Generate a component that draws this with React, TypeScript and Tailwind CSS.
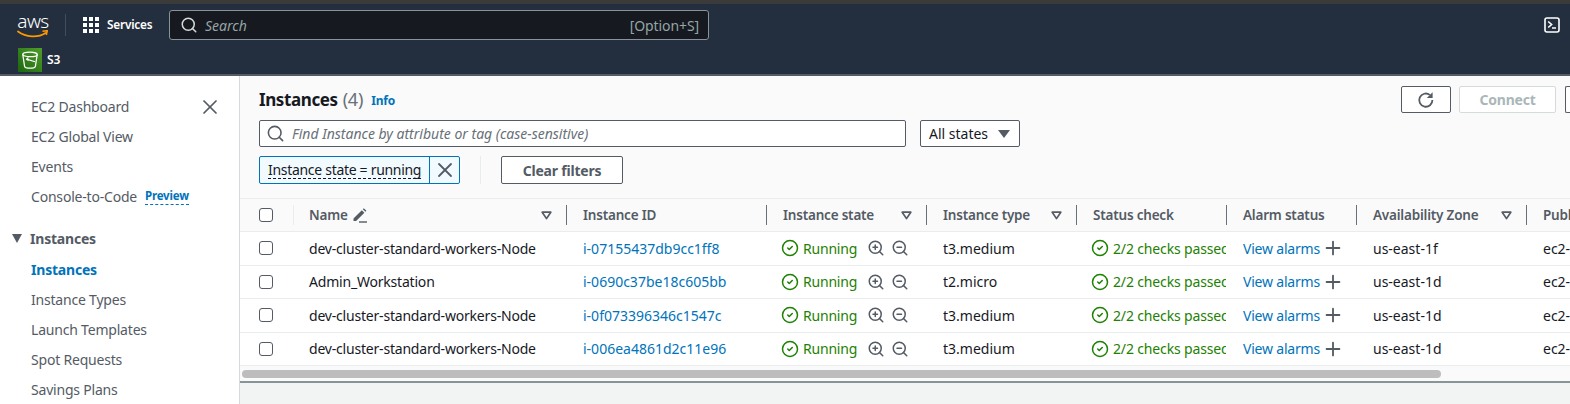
import { CircleCheck, Plus, Search, X, ZoomIn, ZoomOut } from 'lucide-react';
import React from 'react';

type Instance = {
  name: string;
  id: string;
  type: string;
  zone: string;
};

const instances: Instance[] = [
  { name: 'dev-cluster-standard-workers-Node', id: 'i-07155437db9cc1ff8', type: 't3.medium', zone: 'us-east-1f' },
  { name: 'Admin_Workstation', id: 'i-0690c37be18c605bb', type: 't2.micro', zone: 'us-east-1d' },
  { name: 'dev-cluster-standard-workers-Node', id: 'i-0f073396346c1547c', type: 't3.medium', zone: 'us-east-1d' },
  { name: 'dev-cluster-standard-workers-Node', id: 'i-006ea4861d2c11e96', type: 't3.medium', zone: 'us-east-1d' },
];

const navTop = ['EC2 Dashboard', 'EC2 Global View', 'Events'];
const navInstances = ['Instance Types', 'Launch Templates', 'Spot Requests', 'Savings Plans'];

const Checkbox = () => (
  <span className="block h-[14px] w-[14px] rounded-[3px] border border-[#545b64] bg-white" />
);

const SortCaret = () => (
  <svg width="11" height="9" viewBox="0 0 11 9" className="ml-auto shrink-0">
    <path d="M1.2 1.2h8.6L5.5 7.6z" fill="none" stroke="#545b64" strokeWidth="1.7" strokeLinejoin="round" />
  </svg>
);

const HeaderCell = ({
  width,
  label,
  sortable,
}: {
  width: string;
  label: string;
  sortable?: boolean;
}) => (
  <div className={`flex h-full shrink-0 items-center ${width}`}>
    <span className="h-[20px] w-px shrink-0 bg-[#687078]" />
    <div className="flex min-w-0 flex-1 items-center whitespace-nowrap pl-[16px] pr-[14px] text-[13.5px] font-semibold text-[#545b64]">
      <span>{label}</span>
      {sortable && <SortCaret />}
    </div>
  </div>
);

const Row = ({ item }: { item: Instance }) => (
  <div className="flex h-[33.5px] items-center whitespace-nowrap border-b border-[#eaeded] text-[14px] text-[#16191f]">
    <div className="flex w-[53px] shrink-0 pl-[19px]">
      <Checkbox />
    </div>
    <div className="w-[273px] shrink-0 pl-[16px]">{item.name}</div>
    <div className="w-[200px] shrink-0 pl-[17px] tracking-normal text-[#0073bb]">{item.id}</div>
    <div className="flex w-[160px] shrink-0 items-center pl-[15px]">
      <CircleCheck size={18} strokeWidth={2} className="shrink-0 text-[#1d8102]" />
      <span className="ml-[4px] text-[#1d8102]">Running</span>
      <ZoomIn size={18} strokeWidth={2} className="ml-[10px] shrink-0 text-[#545b64]" />
      <ZoomOut size={18} strokeWidth={2} className="ml-[6px] shrink-0 text-[#545b64]" />
    </div>
    <div className="w-[150px] shrink-0 pl-[17px] tracking-normal">{item.type}</div>
    <div className="flex w-[150px] shrink-0 items-center overflow-hidden pl-[15px]">
      <CircleCheck size={18} strokeWidth={2} className="shrink-0 text-[#1d8102]" />
      <span className="ml-[4px] tracking-[-0.15px] text-[#1d8102]">2/2 checks passed</span>
    </div>
    <div className="flex w-[130px] shrink-0 items-center pl-[17px]">
      <span className="text-[#0073bb]">View alarms</span>
      <Plus size={22} strokeWidth={2} className="ml-[2px] shrink-0 text-[#545b64]" />
    </div>
    <div className="w-[170px] shrink-0 pl-[17px] tracking-normal">{item.zone}</div>
    <div className="w-[60px] shrink-0 pl-[17px] tracking-normal">ec2-54-210-33-12</div>
  </div>
);

export default function App() {
  return (
    <div
      className="flex h-[404px] w-[1570px] flex-col overflow-hidden bg-white tracking-[-0.2px]"
      style={{ fontFamily: '"Noto Sans", sans-serif' }}
    >
      <div className="h-[4px] shrink-0 bg-[#3b3b3b]" />

      {/* top nav */}
      <header className="h-[72px] shrink-0 border-b-2 border-[#545b64] bg-[#232f3e] text-white">
        <div className="flex h-[42px] items-center pl-[17px] pr-[10px]">
          <div className="relative h-[30px] w-[32px] shrink-0">
            <span className="block text-center text-[19px] font-light leading-[22px] tracking-[-0.5px]">aws</span>
            <svg width="32" height="9" viewBox="0 0 32 9" className="absolute left-0 top-[20px]">
              <path d="M1 1.5c8 6 20 6.5 27.5 1.5" fill="none" stroke="#ff9900" strokeWidth="1.8" strokeLinecap="round" />
              <path d="M25.5 1.2l4.8-.5-1 4.3" fill="none" stroke="#ff9900" strokeWidth="1.5" strokeLinejoin="round" />
            </svg>
          </div>
          <span className="ml-[16px] h-[22px] w-px shrink-0 bg-[#414d5c]" />
          <div className="ml-[17px] grid shrink-0 grid-cols-3 gap-[2px]">
            {Array.from({ length: 9 }).map((_, i) => (
              <span key={i} className="h-[4px] w-[4px] bg-white" />
            ))}
          </div>
          <span className="ml-[8px] w-[45px] shrink-0 whitespace-nowrap text-[11.8px] font-semibold">Services</span>
          <div className="ml-[17px] flex h-[30px] w-[540px] shrink-0 items-center rounded-[3px] border border-[#879596] bg-[#16191f] pl-[10px] pr-[9px] tracking-normal">
            <Search size={18} strokeWidth={2} className="text-[#d5dbdb]" />
            <span className="ml-[7px] text-[14px] italic text-[#95a5a6]">Search</span>
            <span className="ml-auto text-[14px] tracking-[-0.1px] text-[#95a5a6]">[Option+S]</span>
          </div>
          <svg width="16" height="16" viewBox="0 0 16 16" className="ml-auto shrink-0">
            <rect x="1" y="1" width="14" height="14" rx="2" fill="none" stroke="#fff" strokeWidth="1.6" />
            <path d="M4.2 4.5L7.6 7.5 4.2 10.5" fill="none" stroke="#fff" strokeWidth="1.6" />
            <path d="M8 11h4" stroke="#fff" strokeWidth="1.5" />
          </svg>
        </div>
        <div className="flex items-center pl-[18px] pt-[2px]">
          <div className="flex h-[24px] w-[24px] items-center justify-center bg-gradient-to-tr from-[#1b660f] to-[#4f9e2a]">
            <svg width="20" height="20" viewBox="0 0 18 18" fill="none" stroke="#fff" strokeWidth="1.1">
              <ellipse cx="9" cy="4" rx="6.5" ry="2" />
              <path d="M2.5 4l1.6 10.5c.2 1.2 2.4 1.9 4.9 1.9s4.7-.7 4.9-1.9L15.5 4" />
              <path d="M6 8.2l7.5 2.4" />
              <path d="M7.6 6.8L6 8.2l1.7 1.2" />
            </svg>
          </div>
          <span className="ml-[5px] text-[12px] font-semibold">S3</span>
        </div>
      </header>

      <div className="flex min-h-0 flex-1">
        {/* sidebar */}
        <aside className="w-[240px] shrink-0 border-r border-[#d5dbdb] bg-white pt-[15px] text-[14px] text-[#545b64]">
          <div className="flex">
            <div className="flex-1">
              {navTop.map((label) => (
                <div key={label} className="flex h-[30px] items-center pl-[31px]">
                  {label}
                </div>
              ))}
            </div>
            <X size={24} strokeWidth={1.7} className="mr-[17px] mt-[4px] shrink-0 text-[#545b64]" />
          </div>
          <div className="flex h-[30px] items-center pl-[31px]">
            <span>Console-to-Code</span>
            <span className="ml-[8px] border-b border-dashed border-[#0073bb] text-[11.5px] font-bold leading-[16px] text-[#0073bb]">
              Preview
            </span>
          </div>
          <div className="mt-[12px] flex h-[30px] items-center pl-[12px] font-bold">
            <svg width="10" height="9" viewBox="0 0 10 9" className="shrink-0">
              <path d="M0 0h10L5 9z" fill="#545b64" />
            </svg>
            <span className="ml-[8px]">Instances</span>
          </div>
          <div className="mt-px flex h-[30px] items-center pl-[31px] font-bold text-[#0073bb]">Instances</div>
          {navInstances.map((label) => (
            <div key={label} className="flex h-[30px] items-center pl-[31px]">
              {label}
            </div>
          ))}
        </aside>

        {/* main */}
        <main className="min-w-0 flex-1 overflow-hidden bg-[#f2f3f3]">
          <div className="bg-[#fafafa]">
            <div className="pl-[19px] pt-[10px]">
              <div className="flex h-[27px] items-center">
                <h1 className="text-[17px] font-bold tracking-[-0.4px] text-[#16191f]">Instances</h1>
                <span className="ml-[5px] text-[18px] text-[#687078]">(4)</span>
                <span className="ml-[8px] mt-[2px] text-[12px] font-bold text-[#0073bb]">Info</span>
                <button className="ml-auto flex h-[27px] w-[50px] items-center justify-center rounded-[2px] border border-[#545b64] bg-white">
                  <svg width="18" height="18" viewBox="0 0 18 18" fill="none">
                    <path d="M12.8 3.9A6.6 6.6 0 1 0 15.4 9" stroke="#545b64" strokeWidth="1.8" />
                    <path d="M15.6 1.2v5.8H9.8z" fill="#545b64" />
                  </svg>
                </button>
                <button className="ml-[8px] h-[27px] w-[97px] rounded-[2px] border border-[#d5dbdb] bg-white text-[14px] font-bold text-[#aab7b8]">
                  Connect
                </button>
                <span className="ml-[9px] h-[27px] w-[5px] rounded-l-[2px] border border-r-0 border-[#545b64] bg-white" />
              </div>

              <div className="mt-[7px] flex items-center">
                <div className="flex h-[27px] w-[647px] items-center rounded-[2px] border border-[#545b64] bg-white pl-[6px] tracking-normal">
                  <Search size={19} strokeWidth={2} className="text-[#545b64]" />
                  <span className="ml-[7px] text-[14px] italic text-[#687078]">
                    Find Instance by attribute or tag (case-sensitive)
                  </span>
                </div>
                <div className="ml-[14px] flex h-[27px] w-[100px] items-center rounded-[2px] border border-[#545b64] bg-white pl-[8px] pr-[9px] text-[14px] tracking-normal text-[#16191f]">
                  <span>All states</span>
                  <svg width="12" height="8" viewBox="0 0 12 8" className="ml-auto">
                    <path d="M0 0h12L6 8z" fill="#545b64" />
                  </svg>
                </div>
              </div>

              <div className="mt-[9px] flex h-[28px] items-center">
                <div className="flex h-[28px] w-[201px] items-center rounded-[2px] border border-[#0073bb] bg-[#f1faff]">
                  <span className="ml-[8px] whitespace-nowrap border-b border-dashed border-[#16191f] text-[14px] leading-[17px] tracking-[-0.3px] text-[#16191f]">
                    Instance state = running
                  </span>
                  <span className="ml-auto flex h-full w-[30px] shrink-0 items-center justify-center border-l border-[#0073bb]">
                    <X size={24} strokeWidth={1.8} className="shrink-0 text-[#545b64]" />
                  </span>
                </div>
                <span className="ml-[20px] h-[28px] w-px bg-[#eaeded]" />
                <button className="ml-[20px] h-[28px] w-[122px] rounded-[2px] border border-[#545b64] bg-white text-[14px] font-bold text-[#545b64]">
                  Clear filters
                </button>
              </div>
            </div>

            <div className="mt-[14px] border-b-2 border-[#879596]">
              <div className="flex h-[34px] items-center border-y border-[#eaeded] bg-[#fafafa]">
                <div className="flex h-full w-[53px] shrink-0 items-center pl-[19px]">
                  <Checkbox />
                </div>
                <div className="flex h-full w-[273px] shrink-0 items-center">
                  <span className="h-[20px] w-px shrink-0 bg-[#eaeded]" />
                  <div className="flex flex-1 items-center pl-[15px] pr-[14px] text-[13.5px] font-semibold text-[#545b64]">
                    <span>Name</span>
                    <svg width="15" height="16" viewBox="0 0 15 16" className="ml-[4px] shrink-0">
                      <path d="M1.5 11.5L9.8 3.2l2.6 2.6-8.3 8.3H1.5z" fill="#545b64" />
                      <path d="M10.8 2.2l1-1 2.6 2.6-1 1z" fill="#545b64" />
                      <path d="M7 15h8" stroke="#545b64" strokeWidth="1.4" />
                    </svg>
                    <SortCaret />
                  </div>
                </div>
                <HeaderCell width="w-[200px]" label="Instance ID" />
                <HeaderCell width="w-[160px]" label="Instance state" sortable />
                <HeaderCell width="w-[150px]" label="Instance type" sortable />
                <HeaderCell width="w-[150px]" label="Status check" />
                <HeaderCell width="w-[130px]" label="Alarm status" />
                <HeaderCell width="w-[170px]" label="Availability Zone" sortable />
                <HeaderCell width="w-[60px]" label="Public IPv4 DNS" />
              </div>

              <div className="bg-white">
                {instances.map((item) => (
                  <Row key={item.id} item={item} />
                ))}
              </div>

              {/* horizontal scrollbar */}
              <div className="h-[15px] bg-[#fafafa] pl-[2px] pt-[4px]">
                <div className="h-[8px] w-[1199px] rounded-full bg-[#bdbdbd]" />
              </div>
            </div>
          </div>
        </main>
      </div>
    </div>
  );
}
